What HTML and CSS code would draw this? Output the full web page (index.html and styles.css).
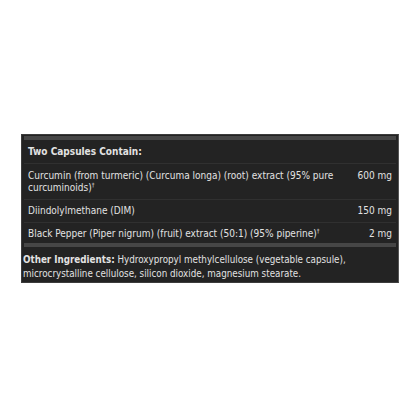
FILE: index.html
```html
<!DOCTYPE html>
<html lang="en">
<head>
<meta charset="utf-8">
<link rel="stylesheet" href="styles.css">
</head>
<body>
<div class="panel">
  <div class="bar"></div>
  <div class="head">Two Capsules Contain:</div>
  <div class="row first">
    <div class="name">Curcumin (from turmeric) (Curcuma longa) (root) extract (95% pure curcuminoids)<sup>†</sup></div>
    <div class="amt">600 mg</div>
  </div>
  <div class="row">
    <div class="name">Diindolylmethane (DIM)</div>
    <div class="amt">150 mg</div>
  </div>
  <div class="row last">
    <div class="name">Black Pepper (Piper nigrum) (fruit) extract (50:1) (95% piperine)<sup>†</sup></div>
    <div class="amt">2 mg</div>
  </div>
  <div class="bar"></div>
  <div class="other"><b>Other Ingredients:</b> Hydroxypropyl methylcellulose (vegetable capsule), microcrystalline cellulose, silicon dioxide, magnesium stearate.</div>
</div>
</body>
</html>
```
FILE: styles.css
```css
html, body {
  margin: 0;
  padding: 0;
  background: #ffffff;
}
body {
  padding: 134px 0 0 21px;
  font-family: "DejaVu Sans Condensed", "DejaVu Sans", sans-serif;
  font-stretch: condensed;
  font-size: 10px;
  color: #e2e2e2;
}
.panel {
  width: 372px;
  background: #232323;
  border: 1px solid #3c3c3c;
  border-right-color: #555555;
  padding: 1px 2px 0 2px;
}
.bar {
  height: 4px;
  background: #464646;
}
.head {
  font-weight: bold;
  line-height: 13px;
  padding: 5px 4px 5px 4px;
  border-bottom: 1px solid #303030;
}
.row {
  display: flex;
  justify-content: space-between;
  align-items: flex-start;
  line-height: 12px;
  padding: 5px 4px 5px 4px;
  border-bottom: 1px solid #303030;
}
.row.first {
  padding-top: 6px;
}
.row.last {
  border-bottom: none;
  padding-bottom: 3px;
}
.name {
  width: 326px;
}
.amt {
  white-space: nowrap;
}
sup {
  font-size: 6px;
  line-height: 0;
  vertical-align: 4px;
}
.other {
  font-size: 9.75px;
  line-height: 14px;
  padding: 6px 0 1px 0;
  margin-left: -1px;
}
.other b {
  font-weight: bold;
}
```
